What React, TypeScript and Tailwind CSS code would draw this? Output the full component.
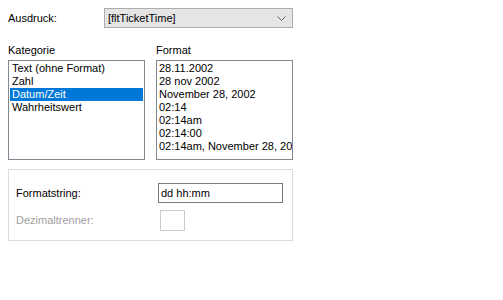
import { useState } from "react";

const KATEGORIEN = ["Text (ohne Format)", "Zahl", "Datum/Zeit", "Wahrheitswert"];

const FORMATE = [
  "28.11.2002",
  "28 nov 2002",
  "November 28, 2002",
  "02:14",
  "02:14am",
  "02:14:00",
  "02:14am, November 28, 2002",
];

export default function App() {
  const [kategorie, setKategorie] = useState(2);
  const [formatString, setFormatString] = useState("dd hh:mm");

  return (
    <div className="w-[503px] h-[300px] bg-white text-[11px] text-black font-['Liberation_Sans',Arial,sans-serif]">
      <div className="w-[293px] pl-2 pt-2">
        {/* Ausdruck */}
        <div className="flex items-center h-[20px]">
          <div className="w-[96px]">Ausdruck:</div>
          <div className="flex-1 h-[20px] flex items-center justify-between bg-[#e5e5e5] border border-[#adadad] pl-[3px] pr-[6px]">
            <span>[fltTicketTime]</span>
            <svg width="9" height="5" viewBox="0 0 9 5" fill="none">
              <path d="M0.5 0.5 L4.5 4.5 L8.5 0.5" stroke="#606060" strokeWidth="1" />
            </svg>
          </div>
        </div>

        {/* Kategorie + Format */}
        <div className="flex gap-[11px] mt-[16px]">
          <div className="w-[137px]">
            <div className="h-[16px] leading-[13px]">Kategorie</div>
            <div className="h-[100px] border border-[#828790] pt-[1px] px-[1px]">
              {KATEGORIEN.map((k, i) => (
                <div
                  key={k}
                  onClick={() => setKategorie(i)}
                  className={`h-[13px] leading-[13px] pl-[2px] whitespace-nowrap ${i === kategorie ? "bg-[#0078d7] text-white" : ""}`}
                >
                  {k}
                </div>
              ))}
            </div>
          </div>
          <div className="w-[137px]">
            <div className="h-[16px] leading-[13px]">Format</div>
            <div className="h-[100px] border border-[#828790] pt-[1px] px-[1px] overflow-hidden">
              {FORMATE.map((f) => (
                <div key={f} className="h-[13px] leading-[13px] pl-[1px] whitespace-nowrap">
                  {f}
                </div>
              ))}
            </div>
          </div>
        </div>

        {/* Formatstring group */}
        <div className="mt-[9px] h-[72px] border border-[#dcdcdc] pl-[7px] pt-[13px]">
          <div className="flex items-center h-[20px]">
            <div className="w-[142px]">Formatstring:</div>
            <input
              value={formatString}
              onChange={(e) => setFormatString(e.target.value)}
              className="w-[125px] h-[20px] border border-[#7a7a7a] px-[2px] outline-none text-[11px]"
            />
          </div>
          <div className="flex items-center h-[21px] mt-[7px]">
            <div className="w-[144px] text-[#a0a0a0]">Dezimaltrenner:</div>
            <div className="w-[25px] h-[21px] border border-[#cccccc]" />
          </div>
        </div>
      </div>
    </div>
  );
}
